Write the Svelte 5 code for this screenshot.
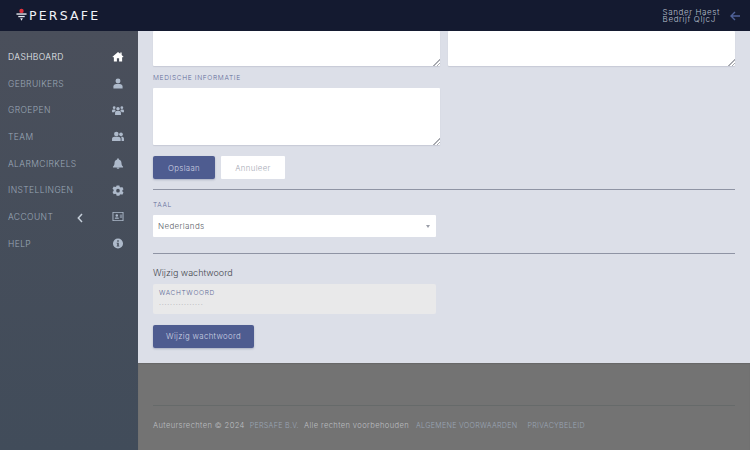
<script>
  const nav = [
    { label: 'DASHBOARD', icon: 'home', active: true },
    { label: 'GEBRUIKERS', icon: 'user' },
    { label: 'GROEPEN', icon: 'users3' },
    { label: 'TEAM', icon: 'users2' },
    { label: 'ALARMCIRKELS', icon: 'bell' },
    { label: 'INSTELLINGEN', icon: 'cog' },
    { label: 'ACCOUNT', icon: 'card', chevron: true },
    { label: 'HELP', icon: 'info' }
  ];
</script>

<div class="page">
  <header class="topbar">
    <div class="logo">
      <svg width="11" height="14" viewBox="0 0 12 14" class="mark">
        <circle cx="6" cy="2.5" r="2.4" fill="#e0323c" />
        <rect x="0.5" y="5.2" width="11" height="1.5" fill="#e8ecf2" />
        <rect x="2.5" y="8" width="7" height="1.4" fill="#e8ecf2" />
        <path d="M4.5 10.6h3L6 13.4z" fill="#e8ecf2" />
      </svg>
      <span>PERSAFE</span>
    </div>
    <div class="who">
      <div class="names"><div>Sander Haest</div><div>Bedrijf QIjcJ</div></div>
      <svg width="10" height="10" viewBox="0 0 10 10" class="back">
        <path d="M5 1 1 5l4 4M1 5h9" fill="none" stroke="#4f6299" stroke-width="1.4" />
      </svg>
    </div>
  </header>

  <div class="body">
    <nav class="sidebar">
      {#each nav as item}
        <div class="item" class:active={item.active}>
          <span class="label">{item.label}</span>
          {#if item.chevron}
            <svg class="chev" width="6" height="10" viewBox="0 0 6 10"><path d="M5 1 1.3 5 5 9" fill="none" stroke="#c5ced9" stroke-width="1.5" /></svg>
          {/if}
          <svg class="icon" width="12" height="11" viewBox="0 0 13 12" fill={item.active ? '#ffffff' : '#aebacb'}>
            {#if item.icon === 'home'}
              <path d="M6.5 1 .5 6.2l.7.8L2 6.4V11.500h3.300V8h2.400v3.500H11V6.400l.8.6.7-.8L10.500 4.400V1.500H9v1.600z" />
            {:else if item.icon === 'user'}
              <circle cx="6.500" cy="3.200" r="2.700" /><path d="M1.500 11.500V9.300C1.500 7.600 3 6.600 4.500 6.600h4c1.500 0 3 1 3 2.700v2.200z" />
            {:else if item.icon === 'users3'}
              <circle cx="6.500" cy="4" r="1.900" /><circle cx="2.300" cy="2.900" r="1.500" /><circle cx="10.700" cy="2.900" r="1.500" />
              <path d="M3.300 11V8.500c0-1.300 1-2 2-2h2.400c1 0 2 .7 2 2V11zM0 8V6.300c0-1 .8-1.500 1.500-1.500h1.800c.2 1 .5 1.400 1 1.800C3 7 2.500 7.500 2.400 8zM13 8V6.300c0-1-.8-1.500-1.500-1.500H9.700c-.2 1-.5 1.400-1 1.800 1.300.4 1.800.9 1.900 1.400z" />
            {:else if item.icon === 'users2'}
              <circle cx="4.700" cy="3.200" r="2.500" /><circle cx="9.800" cy="3.600" r="2" />
              <path d="M0 11V8.500C0 7 1.300 6.200 2.500 6.200h4.300C8 6.200 9.400 7 9.400 8.500V11zM10.400 11V8.300c0-.8-.3-1.400-.8-1.900h1.100c1.100 0 2.300.7 2.300 2.100V11z" />
            {:else if item.icon === 'bell'}
              <path d="M5.600 1.200c0-.5.400-.9.900-.9s.9.400.9.900v.5c1.800.4 2.900 1.800 2.900 3.700 0 2.400 1.100 3.300 1.700 4v.9H1v-.9c.6-.7 1.700-1.600 1.700-4 0-1.900 1.100-3.300 2.900-3.700zM5 10.600h3c0 .7-.7 1.200-1.500 1.200S5 11.300 5 10.600z" />
            {:else if item.icon === 'cog'}
              <path fill-rule="evenodd" d="M5 .5h3l.4 1.700 1.200.6 1.600-.6 1.300 2.500-1.200 1.100v1.300l1.200 1.100-1.300 2.500-1.600-.6-1.200.6L8 11.800H5l-.4-1.700-1.200-.6-1.600.6L.5 7.600l1.200-1.100V5.200L.5 4.100l1.300-2.500 1.600.6 1.200-.6zM6.500 4.200a2 2 0 1 0 0 4 2 2 0 0 0 0-4z" />
            {:else if item.icon === 'card'}
              <path fill-rule="evenodd" d="M.5 1h12v10H.5zM1.500 2v8h10V2zM3 8.500c0-1 .6-1.500 1.500-1.500H6c.9 0 1.500.5 1.500 1.500zM5.200 3.500a1.400 1.400 0 1 1 0 2.800 1.400 1.400 0 0 1 0-2.800zM8.500 4H11v1H8.500zM8.500 6H11v1H8.500z" />
            {:else}
              <path fill-rule="evenodd" d="M6.500.5a5.500 5.500 0 1 1 0 11 5.500 5.500 0 0 1 0-11zM5.700 2.500v1.700h1.600V2.500zM5 5.200V6h.7v2.500H5v.9h3v-.9h-.7V5.200z" />
            {/if}
          </svg>
        </div>
      {/each}
    </nav>

    <div class="main">
      <section class="content">
        <div class="row">
          <textarea class="area short"></textarea>
          <textarea class="area short"></textarea>
        </div>
        <div class="lbl med">MEDISCHE INFORMATIE</div>
        <textarea class="area tall"></textarea>
        <div class="btns">
          <button class="primary save">Opslaan</button>
          <button class="cancel">Annuleer</button>
        </div>
        <hr class="rule first" />
        <div class="lbl taal">TAAL</div>
        <div class="select"><span>Nederlands</span><i class="caret"></i></div>
        <hr class="rule second" />
        <div class="title">Wijzig wachtwoord</div>
        <div class="pw">
          <div class="pwlabel">WACHTWOORD</div>
          <div class="dots">················</div>
        </div>
        <button class="primary change">Wijzig wachtwoord</button>
      </section>
      <footer class="footer">
        <div class="line"></div>
        <div class="copy">
          <span>Auteursrechten © 2024</span>
          <span class="link">PERSAFE B.V.</span>
          <span>Alle rechten voorbehouden</span>
          <span class="link terms">ALGEMENE VOORWAARDEN</span>
          <span class="link priv">PRIVACYBELEID</span>
        </div>
      </footer>
    </div>
  </div>
</div>

<style>
  :global(body) { margin: 0; }
  .page {
    width: 750px; height: 450px; overflow: hidden; display: flex; flex-direction: column;
    font-family: "Inter", "Liberation Sans", sans-serif; font-weight: 300;
  }
  .topbar {
    height: 31px; flex: none; background: #141a30; display: flex; align-items: center;
    justify-content: space-between; padding: 0 10px 0 16px; box-sizing: border-box;
  }
  .logo { display: flex; align-items: center; gap: 2px; color: #f1f3f7; }
  .logo span { font-size: 12.5px; font-weight: 400; letter-spacing: 2.2px; line-height: 14px; font-family: "DejaVu Sans", sans-serif; }
  .mark { margin-top: -2px; }
  .who { display: flex; align-items: center; gap: 10px; }
  .names { color: #bcc1d0; font-size: 8px; line-height: 7px; letter-spacing: 0.6px; }
  .body { flex: 1; display: flex; min-height: 0; }
  .sidebar {
    width: 138px; flex: none; padding-top: 12.5px; box-sizing: border-box;
    background: linear-gradient(180deg, #4a4f5b 0%, #414c5a 100%);
  }
  .item {
    height: 26.7px; display: flex; align-items: center; padding: 0 14px 0 8px; position: relative;
    color: #9ba7b6; font-size: 8.5px; letter-spacing: 0.4px;
  }
  .item.active { color: #eceff3; }
  .label { flex: 1; }
  .chev { position: absolute; left: 77px; top: 9px; }
  .main { flex: 1; display: flex; flex-direction: column; min-width: 0; }
  .content { height: 332px; flex: none; background: #dcdfe8; padding: 0 15px; box-sizing: border-box; overflow: hidden; }
  .row { display: flex; gap: 8px; }
  textarea.area {
    display: block; background: #fff; border: 0; margin: 0; padding: 0; border-radius: 1px;
    width: 287px; box-sizing: border-box; outline: none; resize: vertical;
    box-shadow: 0 1px 1px rgba(120, 125, 145, 0.2);
  }
  textarea.area::-webkit-resizer {
    background: linear-gradient(135deg, transparent 76%, #a8aab0 76%, #a8aab0 81%, transparent 81%, transparent 88%, #a8aab0 88%, #a8aab0 93%, transparent 93%);
  }
  .short { height: 35px; }
  .tall { height: 57px; }
  .lbl { color: #5d6a98; font-size: 6.6px; letter-spacing: 0.65px; line-height: 8px; }
  .med { margin: 8px 0 6px; }
  .btns { display: flex; gap: 5px; margin-top: 11px; }
  button { font-family: inherit; font-weight: 300; border: 0; padding: 0; font-size: 7.8px; letter-spacing: 0.35px; }
  .primary { background: #4e5c90; color: #ccd1e2; border-radius: 2px; box-shadow: 0 1px 2px rgba(60, 70, 110, 0.3); }
  .save { width: 62px; height: 23px; }
  .cancel { width: 64px; height: 23px; background: #fff; color: #a4a8b4; border-radius: 1px; margin-left: 1px; }
  .rule { border: 0; height: 1px; background: #8f94a4; margin: 0; width: 582px; }
  .first { margin-top: 10px; }
  .taal { margin-top: 11px; }
  .select {
    margin-top: 6px; width: 283px; height: 22px; background: #fff; display: flex; align-items: center;
    justify-content: space-between; padding: 0 6px 0 5px; box-sizing: border-box;
    color: #5a5e68; font-size: 8px; letter-spacing: 0.35px; border-radius: 1px;
  }
  .caret { width: 0; height: 0; border: 2.500px solid transparent; border-top: 3px solid #9a9ea8; border-bottom: 0; }
  .second { margin-top: 16px; }
  .title { color: #45484f; font-size: 9px; letter-spacing: 0; margin-top: 13px; line-height: 11px; font-weight: 300; }
  .pw { margin-top: 6px; width: 283px; height: 30px; background: #e9e9ea; padding: 5px 6px 0; box-sizing: border-box; border-radius: 2px; }
  .pwlabel { color: #5d6a98; font-size: 6.6px; letter-spacing: 0.65px; line-height: 8px; }
  .dots { color: #a8a8ac; font-size: 7px; letter-spacing: 0.8px; line-height: 8px; margin-top: 4px; }
  .change { display: block; margin-top: 11px; width: 101px; height: 22.5px; }
  .footer { flex: 1; background: #737373; padding: 0 15px; box-shadow: inset 0 1px 1px #686868; }
  .line { height: 1px; background: #666a6a; margin-top: 42px; }
  .copy { display: flex; margin-top: 15px; color: #bdbfc1; font-size: 7.6px; letter-spacing: 0.37px; line-height: 10px; white-space: nowrap; }
  .copy span { margin-right: 5px; }
  .copy .link { color: #9aa5b4; font-size: 7.1px; letter-spacing: 0.3px; }
  .copy .terms { margin-left: 2px; margin-right: 10px; }
</style>
